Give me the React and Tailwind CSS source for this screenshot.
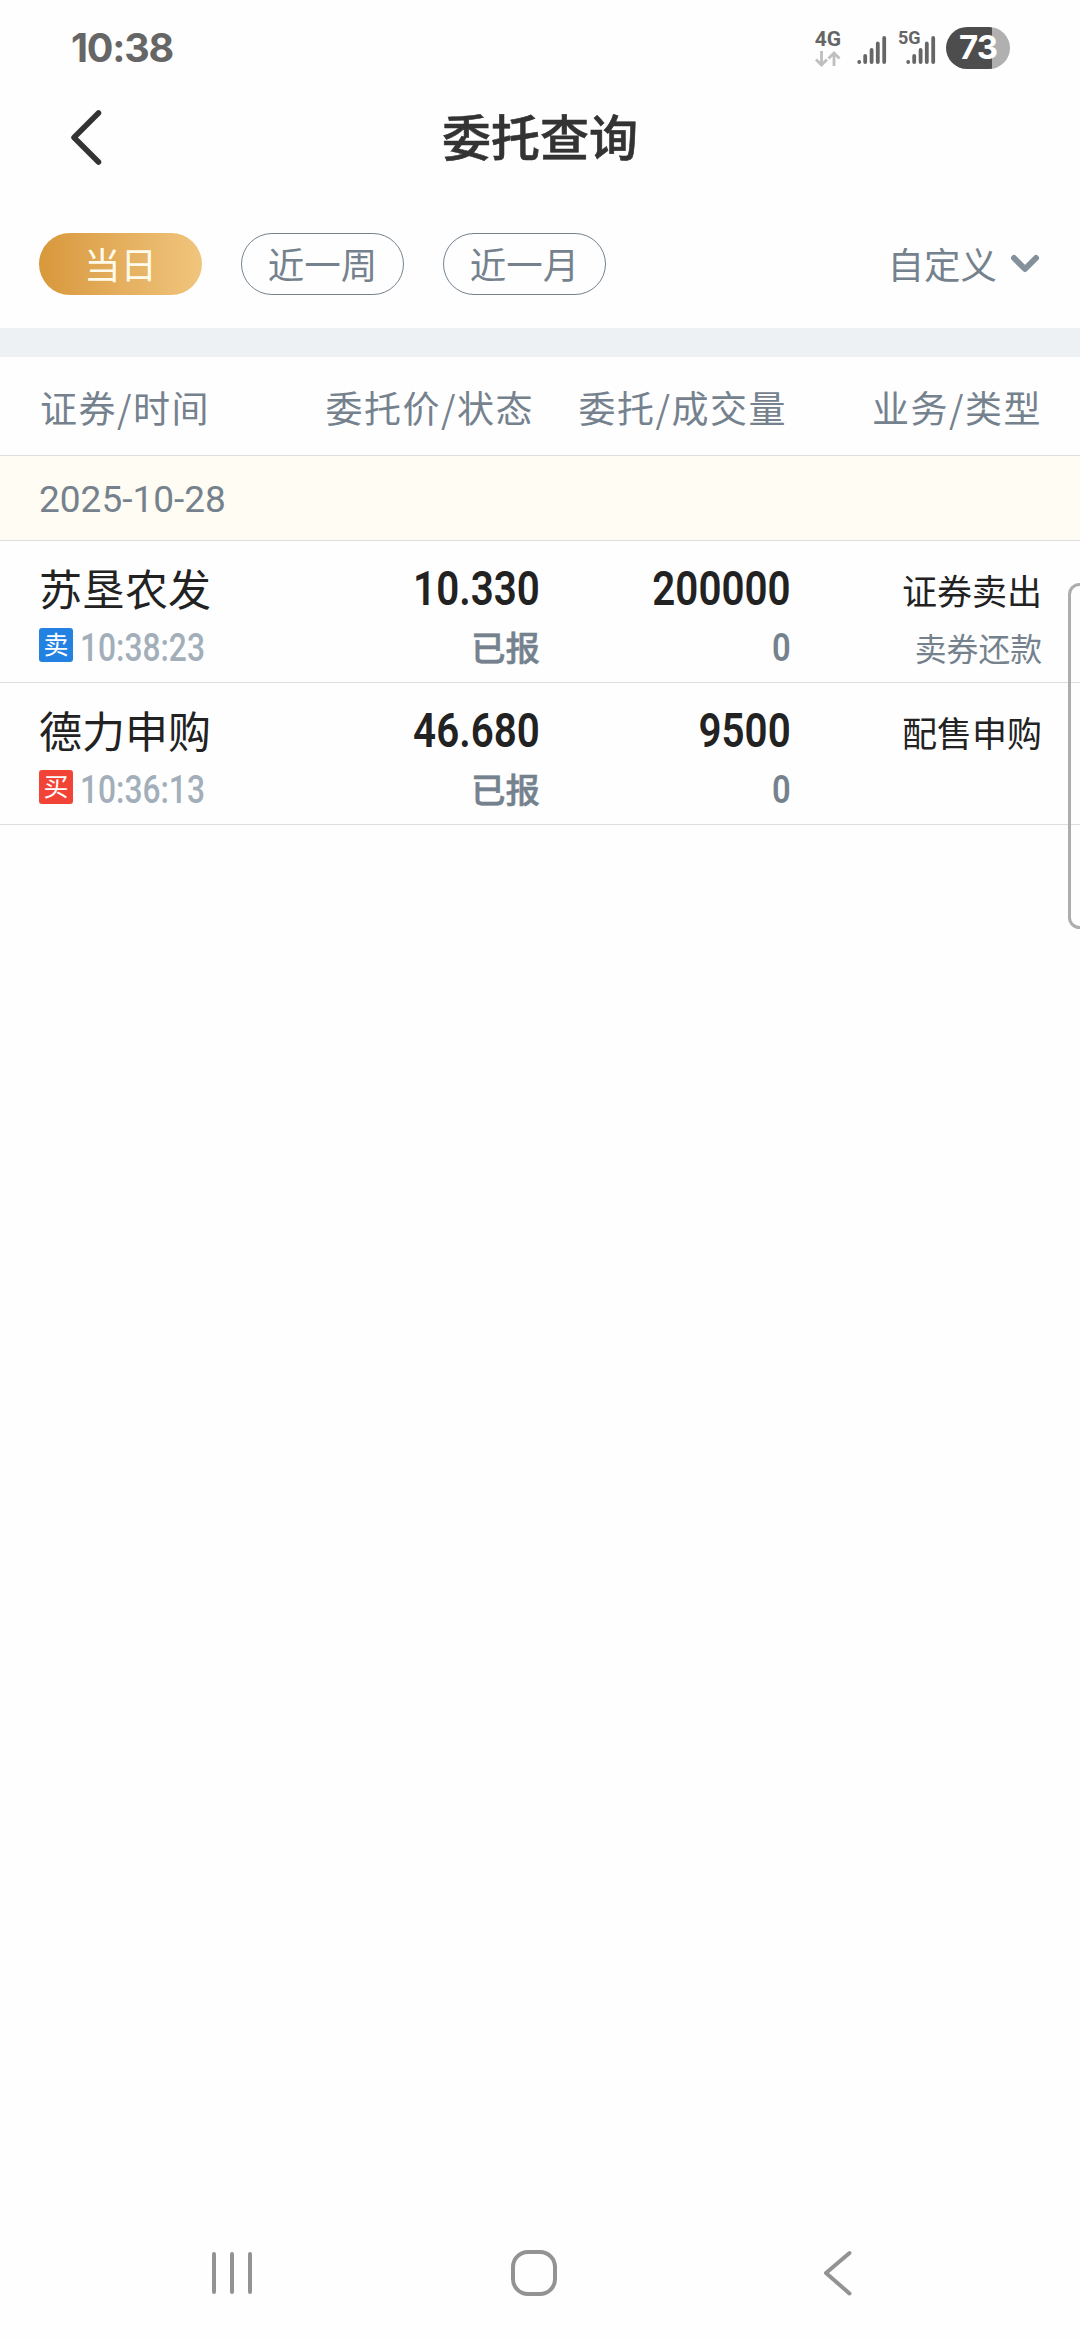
import React from "react";

const ranges = [
  { key: "day", label: "当日" },
  { key: "week", label: "近一周" },
  { key: "month", label: "近一月" },
];

const columns = ["证券/时间", "委托价/状态", "委托/成交量", "业务/类型"];

const orders = [
  {
    name: "苏垦农发",
    side: "卖",
    time: "10:38:23",
    price: "10.330",
    status: "已报",
    amount: "200000",
    filled: "0",
    business: "证券卖出",
    type: "卖券还款",
  },
  {
    name: "德力申购",
    side: "买",
    time: "10:36:13",
    price: "46.680",
    status: "已报",
    amount: "9500",
    filled: "0",
    business: "配售申购",
    type: "",
  },
];

function Signal() {
  return (
    <svg width="30" height="30" viewBox="0 0 30 30" stroke="#666" strokeWidth="3.8" strokeLinecap="round">
      <path d="M2.2 27v.1M8.2 21v6.1M14.6 15v12.1M20.8 8.5v18.6M27.2 3v24.1" />
    </svg>
  );
}

function StatusBar() {
  return (
    <div className="flex h-[96px] items-center justify-between pl-[71px] pr-[70px] font-[Inter,sans-serif]">
      <div className="pt-[2px] text-[39.5px] font-bold leading-none tracking-[-1.2px] text-[#666]">10:38</div>
      <div className="flex h-[42px] items-start">
        <div className="flex w-[26px] flex-col items-center pt-[3px]">
          <span className="font-[Roboto,sans-serif] text-[21px] font-bold leading-[19px] text-[#666]">4G</span>
          <svg className="mt-[2px]" width="26" height="16" viewBox="0 0 26 16" fill="none" stroke="#bfbfbf" strokeWidth="2.8">
            <path d="M6.5 0v14M1 8.5l5.5 5.5 5.5-5.5M19 15V1.5M13.5 7.5L19 2l5.5 5.5" />
          </svg>
        </div>
        <div className="ml-[16px] pt-[8px]">
          <Signal />
        </div>
        <div className="relative ml-[19px] pt-[8px]">
          <Signal />
          <span className="absolute -left-[8px] top-[3px] font-[Roboto,sans-serif] text-[18px] font-bold leading-[16px] text-[#666]">5G</span>
        </div>
        <div className="ml-[10px] flex h-[42px] w-[64px] items-center justify-center rounded-full bg-linear-to-r from-[#4d4d4d] from-72% to-[#b0b0b0] to-72% pb-[2px] text-[33px] font-bold leading-none tracking-[-1px] text-white">
          73
        </div>
      </div>
    </div>
  );
}

function TitleBar() {
  return (
    <div className="grid h-[84px] grid-cols-[1fr_auto_1fr] items-center px-[68px]">
      <button aria-label="返回" className="w-fit">
        <svg width="36" height="60" viewBox="0 0 36 60" fill="none" stroke="#333" strokeWidth="5.5" strokeLinecap="round" strokeLinejoin="round">
          <path d="M30.5 5L6 29.5L30.5 54" />
        </svg>
      </button>
      <h1 className="pb-[7px] text-[49px] font-medium leading-none text-[#333] [-webkit-text-stroke:0.6px_#333]">委托查询</h1>
    </div>
  );
}

function RangeTabs({ active }) {
  return (
    <div className="flex h-[148px] items-center justify-between px-[39px] pt-[53px] pb-[33px] text-[36.5px] leading-none text-[#75828e]">
      <div className="flex gap-[39px]">
        {ranges.map((r) => (
          <button
            key={r.key}
            className={
              r.key === active
                ? "h-[62px] w-[163px] rounded-full bg-linear-to-r from-[#d8983b] to-[#f0c57d] text-[#fffbea]"
                : "h-[62px] w-[163px] rounded-full border border-[#75828e]"
            }
          >
            {r.label}
          </button>
        ))}
      </div>
      <button className="flex items-center gap-[12px]">
        <span>自定义</span>
        <svg width="32" height="22" viewBox="0 0 32 22" fill="none" stroke="#84909c" strokeWidth="6" strokeLinecap="round" strokeLinejoin="round">
          <path d="M5 5l11 11L27 5" />
        </svg>
      </button>
    </div>
  );
}

function OrderRow({ order }) {
  const sideColor = order.side === "卖" ? "bg-[#2381e1]" : "bg-[#f24436]";

  return (
    <div className="grid h-[142px] grid-cols-[250px_251px_251px_251px] border-b border-[#dedede] px-[39px] text-[#222]">
      <div>
        <div className="mt-[22px] text-[43px] leading-[48px]">{order.name}</div>
        <div className="mt-[16px] flex h-[36px] items-center">
          <span className={`flex h-[34px] w-[34px] items-center justify-center rounded-[3px] pb-[3px] text-[25px] leading-none text-white ${sideColor}`}>
            {order.side}
          </span>
          <span className="ml-[7px] inline-block origin-left scale-x-[0.835] pt-[5px] font-[Roboto,sans-serif] text-[38px] font-medium leading-none text-[#a2afba]">
            {order.time}
          </span>
        </div>
      </div>
      <div className="flex flex-col items-end">
        <span className="mt-[23px] inline-block origin-right scale-x-[0.84] font-[Roboto,sans-serif] text-[48px] font-semibold leading-[50px]">
          {order.price}
        </span>
        <span className="mt-[14px] text-[34.5px] font-medium leading-[36px] text-[#75828e] [-webkit-text-stroke:0.5px_#75828e]">
          {order.status}
        </span>
      </div>
      <div className="flex flex-col items-end">
        <span className="mt-[23px] inline-block origin-right scale-x-[0.84] font-[Roboto,sans-serif] text-[48px] font-semibold leading-[50px]">
          {order.amount}
        </span>
        <span className="mt-[16px] inline-block origin-right scale-x-[0.86] font-[Roboto,sans-serif] text-[38px] font-semibold leading-[36px] text-[#75828e]">
          {order.filled}
        </span>
      </div>
      <div className="flex flex-col items-end">
        <span className="mt-[25px] text-[35px] leading-[48px]">{order.business}</span>
        <span className="mt-[15px] text-[31.8px] leading-[36px] text-[#75828e]">{order.type}</span>
      </div>
    </div>
  );
}

function NavBar() {
  return (
    <div className="flex h-[134px] items-center pl-[208px] text-[#939393]">
      <svg width="48" height="50" viewBox="0 0 48 50" stroke="currentColor" strokeWidth="4" strokeLinecap="round">
        <path d="M6 6v38M24 6v38M42 6v38" />
      </svg>
      <svg className="ml-[253px]" width="50" height="50" viewBox="0 0 50 50" fill="none" stroke="currentColor" strokeWidth="4">
        <rect x="4" y="4" width="42" height="42" rx="15" />
      </svg>
      <svg className="ml-[263px]" width="50" height="50" viewBox="0 0 50 50" fill="none" stroke="currentColor" strokeWidth="4" strokeLinecap="round" strokeLinejoin="round">
        <path d="M27.5 5L4 25l23.5 20.5" />
      </svg>
    </div>
  );
}

export default function App() {
  return (
    <div className="relative flex h-[2340px] w-[1080px] flex-col overflow-hidden bg-[#fefefe] font-['Noto_Sans_CJK_SC',sans-serif]">
      <StatusBar />
      <TitleBar />
      <RangeTabs active="day" />
      <div className="h-[29px] bg-[#edf1f4]" />

      <div className="grid h-[99px] grid-cols-[249px_245px_253px_255px] items-center border-b border-[#dcdfe1] pt-[2px] pl-[40px] text-[37px] leading-none tracking-[1.5px] text-[#75828e]">
        {columns.map((c, i) => (
          <div key={c} className={i === 0 ? "text-left" : "text-right"}>
            {c}
          </div>
        ))}
      </div>
      <div className="flex h-[85px] items-center border-b border-[#dedede] bg-[#fffcf3] px-[39px] pt-[3px] font-[Roboto,sans-serif] text-[37px] text-[#75828e]">
        2025-10-28
      </div>

      <div className="flex-1">
        {orders.map((o) => (
          <OrderRow key={o.time} order={o} />
        ))}
      </div>

      <NavBar />

      {/* edge panel handle */}
      <div className="absolute -right-[11px] top-[583px] h-[346px] w-[23px] rounded-[14px] border-[3px] border-[#adadad]" />
    </div>
  );
}
